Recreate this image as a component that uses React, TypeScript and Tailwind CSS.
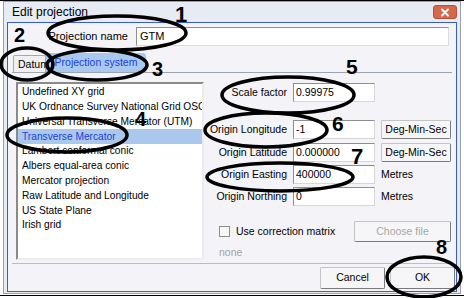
import React from "react";

const projections = [
  "Undefined XY grid",
  "UK Ordnance Survey National Grid OSGB",
  "Universal Transverse Mercator (UTM)",
  "Transverse Mercator",
  "Lambert conformal conic",
  "Albers equal-area conic",
  "Mercator projection",
  "Raw Latitude and Longitude",
  "US State Plane",
  "Irish grid",
];

// callout marks drawn over the dialog: ellipse + number
const marks = [
  { n: "1", cx: 117, cy: 33, rx: 69, ry: 17, x: 175, y: 4, size: "text-[22px]" },
  { n: "2", cx: 27, cy: 64, rx: 26, ry: 16, x: 14, y: 25, size: "text-[20px]" },
  { n: "3", cx: 97, cy: 65, rx: 50, ry: 15, x: 152, y: 59, size: "text-[20px]" },
  { n: "4", cx: 67, cy: 135, rx: 60, ry: 17, x: 135, y: 109, size: "text-[20px]" },
  { n: "5", cx: 288, cy: 95, rx: 66, ry: 18, x: 346, y: 56, size: "text-[21px]" },
  { n: "6", cx: 266, cy: 130, rx: 61, ry: 17, x: 332, y: 113, size: "text-[21px]" },
  { n: "7", cx: 280, cy: 177, rx: 73, ry: 14, x: 351, y: 146, size: "text-[22px]" },
  { n: "8", cx: 424, cy: 277, rx: 37, ry: 20, x: 436, y: 237, size: "text-[20px]" },
];

function Field({ value }: { value: string }) {
  return (
    <div className="w-[82px] h-full bg-white border border-[#8e8e8e] border-r-[#d6d6d6] border-b-[#d6d6d6] px-[2px] flex items-center">
      {value}
    </div>
  );
}

function Btn({ label, w, disabled }: { label: string; w: string; disabled?: boolean }) {
  return (
    <div
      className={`${w} h-full flex items-center justify-center rounded-[2px] border border-[#c4c4c4] border-r-[#7a7a7a] border-b-[#7a7a7a] bg-[#f6f6f8] ${
        disabled ? "text-[#a8a8a8]" : "text-black"
      }`}
    >
      {label}
    </div>
  );
}

function Row({ label, value, extra }: { label: string; value: string; extra?: React.ReactNode }) {
  return (
    <div className="flex items-center h-[19px] gap-[6px]">
      <div className="w-[83px] text-right">{label}</div>
      <Field value={value} />
      {extra}
    </div>
  );
}

export default function App() {
  return (
    <div
      className="relative w-[464px] h-[298px] bg-white overflow-hidden text-[10.5px] text-black leading-none"
      style={{ fontFamily: '"Liberation Sans", Arial, sans-serif' }}
    >
      <div className="h-px bg-black" />
      <div className="ml-[3px] w-[458px] h-[293px] border border-[#9aa0aa] bg-[#e7ebf3] flex flex-col">
        {/* title bar */}
        <div className="h-[20px] flex items-center pl-[8px] pr-[3px] text-[12px]">
          <span>Edit projection</span>
          <div className="ml-auto w-[24px] h-[14px] rounded-[3px] bg-[#d8684c] border border-[#b35438] flex items-center justify-center">
            <svg width="10" height="9" viewBox="0 0 10 9">
              <path d="M2 1.5 L8 7.5 M8 1.5 L2 7.5" stroke="white" strokeWidth="2" strokeLinecap="round" />
            </svg>
          </div>
        </div>

        {/* body */}
        <div className="mx-[3px] mb-[1px] flex-1 border border-[#3a5bd6] bg-[#f4f3f7] flex flex-col">
          {/* name row */}
          <div className="mt-[4px] h-[19px] flex items-center gap-[8px]">
            <div className="w-[120px] text-right text-[11px]">Projection name</div>
            <div className="w-[313px] h-full bg-white border border-[#909090] border-r-[#dcdcdc] border-b-[#dcdcdc] flex items-center px-[3px] text-[11px]">
              GTM
            </div>
          </div>

          {/* tabs */}
          <div className="mt-[6px] ml-[5px] h-[20px] flex items-end">
            <div className="w-[33px] h-[17px] border border-b-0 border-[#a8a8a8] rounded-t-[2px] bg-[#f0f0f2] flex items-center pl-[4px]">
              Datum
            </div>
            <div className="w-[100px] h-[19px] rounded-t-[3px] bg-[#a9c8ef] text-[#1f3fd2] flex items-center justify-center">
              Projection system
            </div>
          </div>

          {/* tab panel */}
          <div className="mx-[4px] h-[192px] border-t border-[#9ca4ad] border-b border-b-[#bdbdbd] flex">
            <div className="mt-[9px] ml-[4px] w-[188px] h-[178px] bg-white border-2 border-[#8a8a8a] border-r-[#ececec] border-b-[#ececec] pt-[1px] overflow-hidden text-[10.2px]">
              {projections.map((p) => (
                <div
                  key={p}
                  className={`h-[14.8px] flex items-center pl-[4px] whitespace-nowrap ${
                    p === "Transverse Mercator" ? "bg-[#a9c8ec] text-[#1f3fd2]" : ""
                  }`}
                >
                  {p}
                </div>
              ))}
            </div>

            <div className="flex-1 flex flex-col">
              <div className="mt-[10px] h-[18px]">
                <Row label="Scale factor" value="0.99975" />
              </div>
              <div className="mt-[19px]">
                <Row label="Origin Longitude" value="-1" extra={<Btn label="Deg-Min-Sec" w="w-[70px]" />} />
              </div>
              <div className="mt-[4px]">
                <Row label="Origin Latitude" value="0.000000" extra={<Btn label="Deg-Min-Sec" w="w-[70px]" />} />
              </div>
              <div className="mt-[3px]">
                <Row label="Origin Easting" value="400000" extra={<span>Metres</span>} />
              </div>
              <div className="mt-[3px]">
                <Row label="Origin Northing" value="0" extra={<span>Metres</span>} />
              </div>

              <div className="mt-[15px] h-[21px] flex items-center">
                <div className="ml-[15px] w-[11px] h-[11px] border border-[#8e8e8e] bg-[#f7f7f7]" />
                <span className="ml-[6px]">Use correction matrix</span>
                <div className="ml-auto mr-[1px] h-full">
                  <Btn label="Choose file" w="w-[97px]" disabled />
                </div>
              </div>
              <div className="mt-[5px] ml-[15px] text-[#a3a3a3]">none</div>
            </div>
          </div>

          {/* dialog buttons */}
          <div className="flex-1 flex items-center justify-end gap-[5px] pr-[1px]">
            <div className="h-[22px]">
              <Btn label="Cancel" w="w-[65px]" />
            </div>
            <div className="h-[22px]">
              <Btn label="OK" w="w-[65px]" />
            </div>
          </div>
        </div>
      </div>
      <div className="mt-[1px] h-px bg-black" />

      {/* annotations */}
      <svg className="absolute inset-0 pointer-events-none" width="464" height="298">
        {marks.map((m) => (
          <ellipse key={m.n} cx={m.cx} cy={m.cy} rx={m.rx} ry={m.ry} fill="none" stroke="black" strokeWidth="3.5" />
        ))}
      </svg>
      {marks.map((m) => (
        <div
          key={m.n}
          className={`absolute font-bold leading-none ${m.size}`}
          style={{ left: m.x, top: m.y }}
        >
          {m.n}
        </div>
      ))}
    </div>
  );
}
